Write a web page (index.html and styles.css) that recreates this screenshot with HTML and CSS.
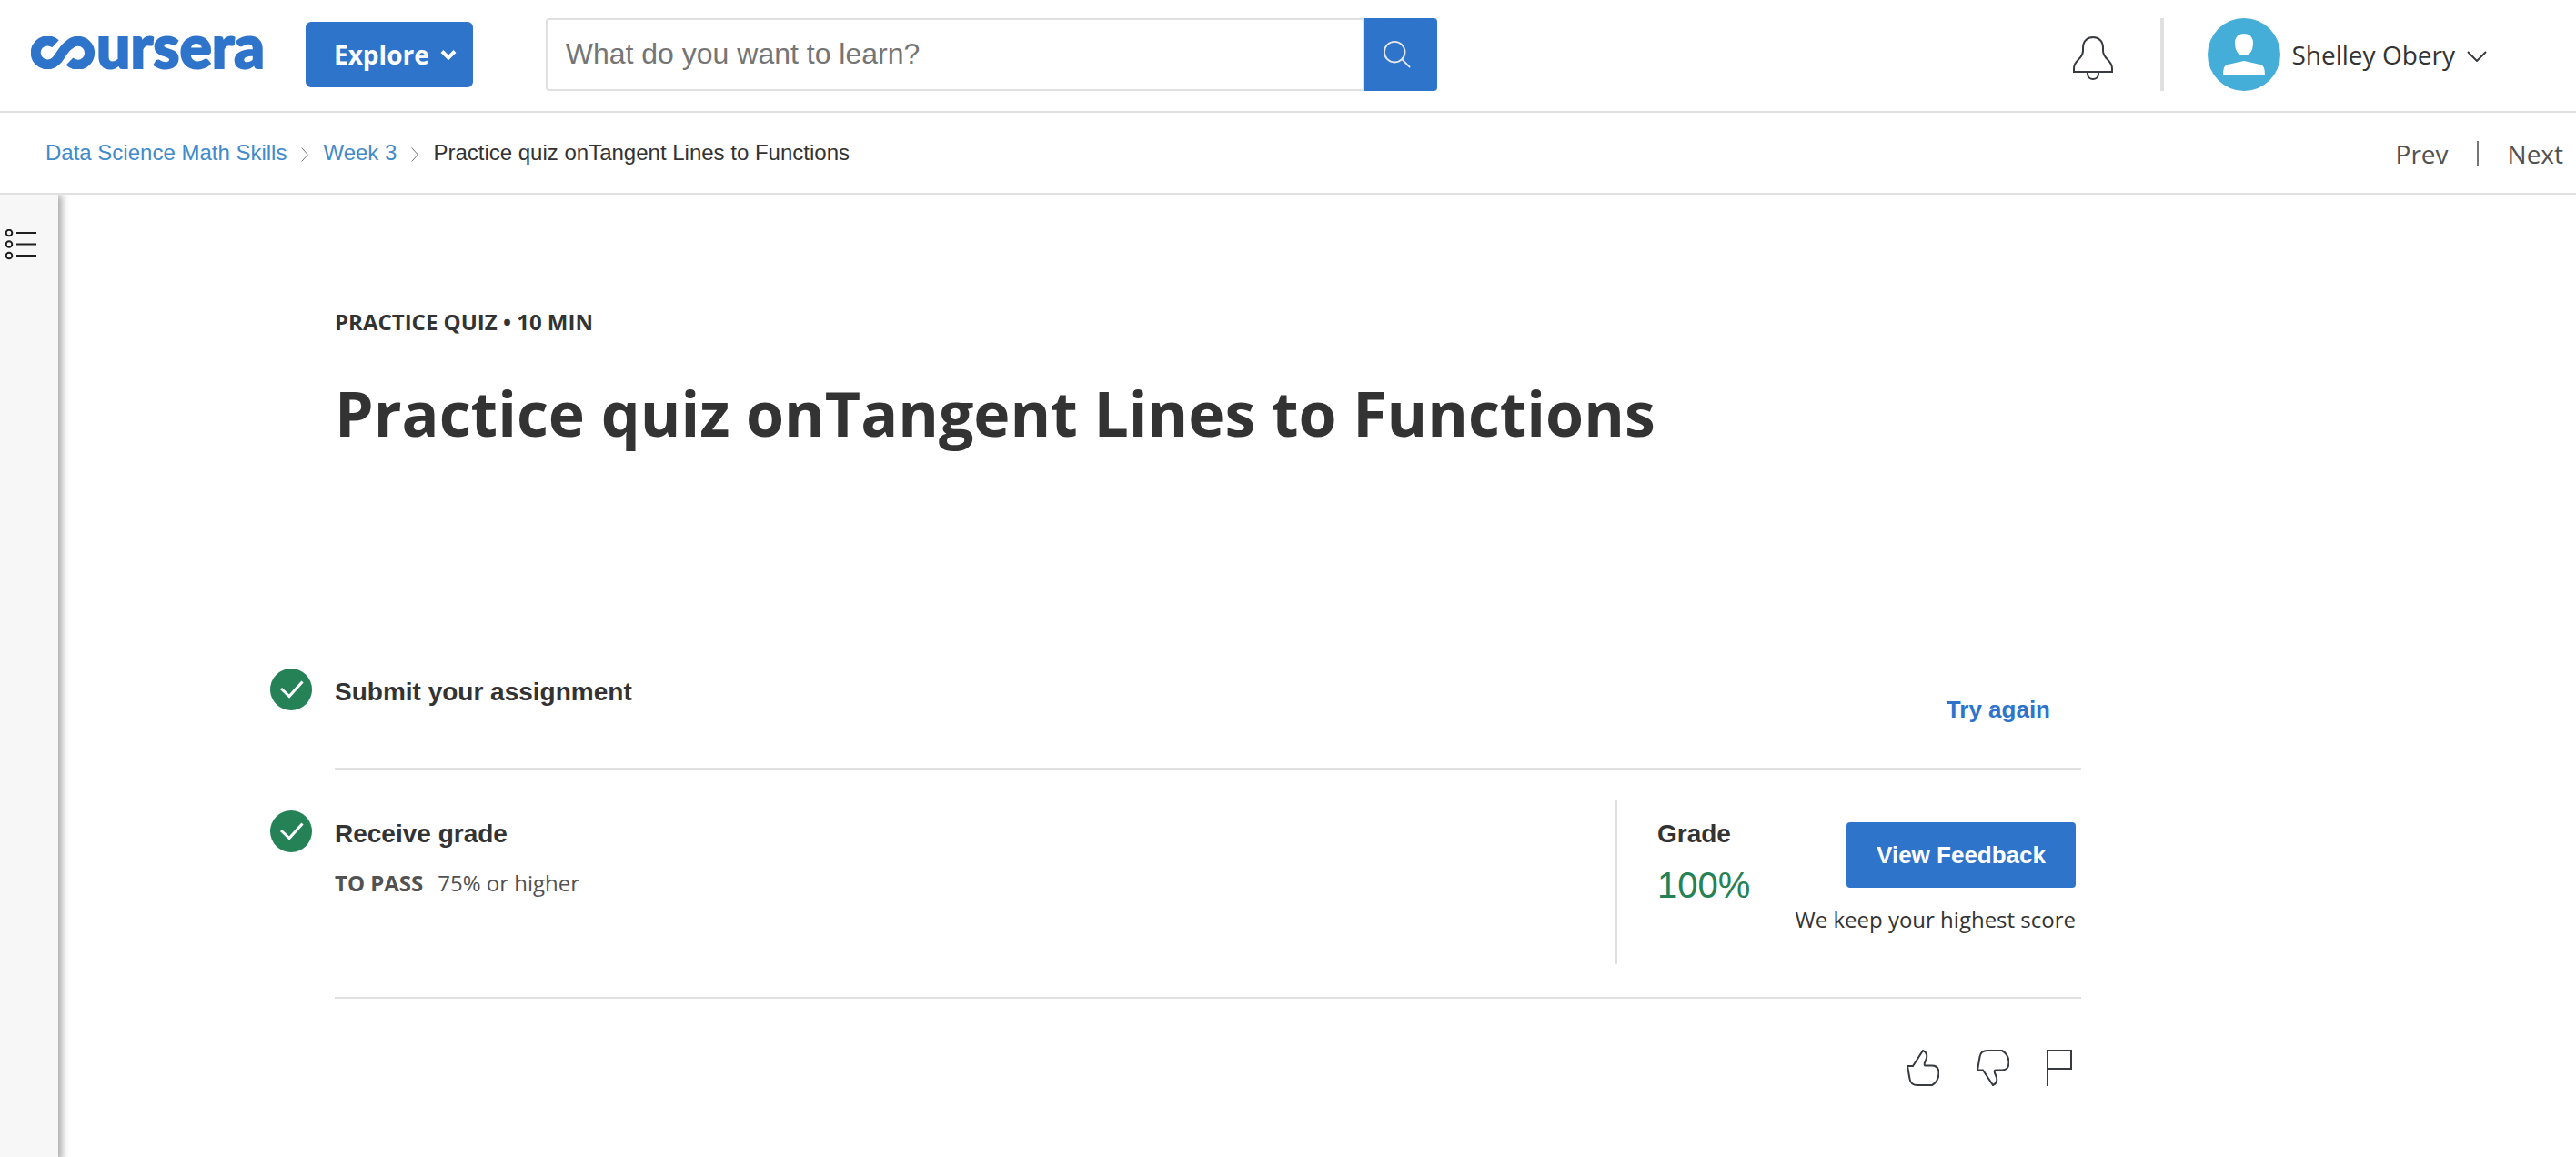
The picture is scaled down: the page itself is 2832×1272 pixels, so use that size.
FILE: index.html
```html
<!DOCTYPE html>
<html lang="en">
<head>
<meta charset="utf-8">
<meta name="viewport" content="width=device-width, initial-scale=1">
<title>Practice quiz onTangent Lines to Functions | Coursera</title>
<link rel="stylesheet" href="styles.css">
</head>
<body>
<header class="topbar">
  <a class="logo" href="#" aria-label="Coursera">
    <svg class="logo-mark" viewBox="0 0 70 36" aria-hidden="true"><path d="M27 8.3A13 13 0 1 0 27.5 27C33 22 35.500 13 42.500 9A13 13 0 1 1 42.500 27.500"/></svg>
    <span class="logo-word">ursera</span>
  </a>
  <button class="explore" type="button">Explore
    <svg class="explore-chevron" viewBox="0 0 18 12" aria-hidden="true"><path d="M2 2.500l7 7 7-7"/></svg>
  </button>
  <form class="search" role="search">
    <input class="search-input" type="text" aria-label="Search" placeholder="What do you want to learn?">
    <button class="search-button" type="button" aria-label="Submit search">
      <svg class="search-icon" viewBox="0 0 34 34" aria-hidden="true"><circle cx="14" cy="14" r="12"/><path d="M22.500 22.500L32 32"/></svg>
    </button>
  </form>
  <div class="account">
    <button class="plain notifications" type="button" aria-label="Notifications">
      <svg class="bell" viewBox="0 0 44 48" aria-hidden="true"><path d="M1 39V35C1 26 11 25 11 16V12.500C11 5 16 1 22 1S33 5 33 12.500V16C33 25 43 26 43 35V39ZM16 39.500V41C16 45 19 47 22 47S28 45 28 41V39.500"/></svg>
    </button>
    <button class="plain profile" type="button">
      <svg class="avatar" viewBox="0 0 80 80" aria-hidden="true"><circle cx="40" cy="40" r="40" fill="#44aed9"/><path fill="#fff" d="M40 17C46 17 50 21 50 27C50 35 47 41 40 41S30 35 30 27C30 21 34 17 40 17ZM17 63C17 56 18 52 22 51L40 47 58 51C62 52 63 56 63 63Z"/></svg>
      <span class="profile-name">Shelley Obery</span>
      <svg class="profile-chevron" viewBox="0 0 22 12" aria-hidden="true"><path d="M1 1l10 10L21 1"/></svg>
    </button>
  </div>
</header>

<div class="subbar">
  <nav class="crumbs" aria-label="Breadcrumb">
    <a href="#">Data Science Math Skills</a>
    <svg class="crumb-arrow" viewBox="0 0 8 16" aria-hidden="true"><path d="M.7.5L7.300 8 .7 15.500"/></svg>
    <a href="#">Week 3</a>
    <svg class="crumb-arrow" viewBox="0 0 8 16" aria-hidden="true"><path d="M.7.5L7.300 8 .7 15.500"/></svg>
    <span>Practice quiz onTangent Lines to Functions</span>
  </nav>
  <nav class="pager" aria-label="Items">
    <a class="pager-prev" href="#">Prev</a>
    <a class="pager-next" href="#">Next</a>
  </nav>
</div>

<div class="layout">
  <aside class="rail">
    <button class="plain" type="button" aria-label="Show course outline">
      <svg class="outline-icon" viewBox="0 0 34 34" aria-hidden="true"><circle cx="4" cy="4" r="3.300"/><circle cx="4" cy="16.500" r="3.300"/><circle cx="4" cy="29" r="3.300"/><path d="M12 4H34M12 16.500H34M12 29H34"/></svg>
    </button>
  </aside>
  <main class="content">
    <div class="intro">
      <p class="kicker">PRACTICE QUIZ • 10 MIN</p>
      <h1 class="title">Practice quiz onTangent Lines to Functions</h1>
    </div>
    <section class="step">
      <svg class="check" viewBox="0 0 46 46" aria-hidden="true"><circle cx="23" cy="23" r="23"/><path d="M12 22L21 30.500 35.500 14.500"/></svg>
      <div class="step-body">
        <h2 class="step-title">Submit your assignment</h2>
        <button class="plain retry" type="button">Try again</button>
      </div>
    </section>
    <section class="step">
      <svg class="check" viewBox="0 0 46 46" aria-hidden="true"><circle cx="23" cy="23" r="23"/><path d="M12 22L21 30.500 35.500 14.500"/></svg>
      <div class="step-body">
        <div class="step-text">
          <h2 class="step-title">Receive grade</h2>
          <p class="pass"><strong>TO PASS</strong><span>75% or higher</span></p>
        </div>
        <div class="grade">
          <div class="grade-score">
            <h2 class="step-title">Grade</h2>
            <p class="score">100%</p>
          </div>
          <div class="grade-action">
            <button class="feedback" type="button">View Feedback</button>
            <p class="note">We keep your highest score</p>
          </div>
        </div>
      </div>
    </section>
    <div class="reactions">
      <button class="plain" type="button" aria-label="Like"><svg class="reaction" viewBox="0 0 36 40" aria-hidden="true"><path d="M1 18H7L18 1C23 3 23 8 21 12C19.500 15 19 17.500 21 17.500H28C33 17.500 35.500 21 35.500 26C35.500 32 32 37 28 39H12C7 39 4 36 3.500 32Z"/></svg></button>
      <button class="plain" type="button" aria-label="Dislike"><svg class="reaction" viewBox="0 0 36 40" aria-hidden="true"><path d="M1 22.500H7L18 39C23 37 23 32 21 28C19.500 25 19 22.500 21 22.500H28C33 22.500 35.500 19 35.500 14C35.500 8 32 3 28 1H12C7 1 4 4 3.500 8Z"/></svg></button>
      <button class="plain" type="button" aria-label="Report"><svg class="reaction flag" viewBox="0 0 28 40" aria-hidden="true"><path d="M1 40V1H27V21H1"/></svg></button>
    </div>
  </main>
</div>
</body>
</html>
```

FILE: styles.css
```css
* { box-sizing: border-box; }

body {
  margin: 0;
  min-height: 100vh;
  display: flex;
  flex-direction: column;
  background: #fff;
  color: #333;
  font-family: "Open Sans", sans-serif;
  font-size: 24px;
  line-height: 32px;
}

h1, h2, p { margin: 0; }
a { text-decoration: none; }
svg { display: block; flex: none; fill: none; }
button { border: 0; font-family: inherit; cursor: pointer; }

.plain {
  padding: 0;
  background: none;
  color: inherit;
}

/* Top bar */
.topbar {
  display: flex;
  align-items: flex-start;
  height: 124px;
  padding: 20px 98px 0 34px;
  border-bottom: 2px solid #e0e0e0;
}

.logo {
  display: flex;
  align-items: center;
  width: 254px;
  height: 76px;
  color: #2f74cb;
}

.logo-mark {
  width: 70px;
  height: 36px;
  stroke: currentColor;
  stroke-width: 11;
}

.logo-word {
  font: 900 66px/64px Lato, sans-serif;
  margin: -16px 0 0 2px;
  -webkit-text-stroke: 2px currentColor;
}

.explore {
  display: flex;
  align-items: center;
  gap: 12px;
  height: 72px;
  margin: 4px 80px 0 48px;
  padding: 0 18px 0 31px;
  border-radius: 6px;
  background: #2f74cb;
  color: #fff;
  font-size: 28px;
  font-weight: 700;
}

.explore-chevron {
  width: 18px;
  height: 12px;
  stroke: #fff;
  stroke-width: 4;
}

.search {
  display: flex;
  flex: 0 1 980px;
  height: 80px;
}

.search-input {
  flex: 1;
  min-width: 0;
  padding: 0 20px 2px;
  border: 2px solid #e0e0e0;
  border-radius: 4px 0 0 4px;
  color: #333;
  font: 32px "Liberation Sans", sans-serif;
}

.search-input::placeholder { color: #757575; opacity: 1; }

.search-button {
  width: 80px;
  padding: 0 20px;
  border-radius: 0 4px 4px 0;
  background: #2f74cb;
}

.search-icon {
  width: 32px;
  height: 32px;
  stroke: #e8e8e8;
  stroke-width: 2;
}

.account {
  display: flex;
  margin-left: auto;
}

.notifications { padding-top: 8px; }

.bell {
  width: 44px;
  height: 48px;
  stroke: #373a3f;
  stroke-width: 2;
}

.profile {
  display: flex;
  align-items: center;
  height: 80px;
  margin-left: 52px;
  padding-left: 48px;
  border-left: 4px solid #e0e0e0;
  font-size: 28px;
}

.avatar {
  width: 80px;
  height: 80px;
}

.profile-name { margin: 0 13px 0 12px; }

.profile-chevron {
  width: 22px;
  height: 12px;
  margin-top: 4px;
  stroke: #373a3f;
  stroke-width: 2;
}

/* Breadcrumbs and pager */
.subbar {
  display: flex;
  align-items: center;
  justify-content: space-between;
  height: 90px;
  padding: 0 14px 0 50px;
  border-bottom: 2px solid #e0e0e0;
}

.crumbs {
  display: flex;
  align-items: center;
  gap: 16px;
  font-family: "Liberation Sans", sans-serif;
}

.crumbs a { color: #428bca; }

.crumb-arrow {
  width: 8px;
  height: 16px;
  margin-top: 4px;
  stroke: #757575;
  stroke-width: 1;
}

.pager {
  display: flex;
  font-size: 28px;
  line-height: 28px;
  margin-top: 2px;
}

.pager a { color: #525252; }

.pager-prev {
  padding-right: 31px;
  border-right: 2px solid #757575;
}

.pager-next { padding-left: 32px; }

/* Page body */
.layout {
  display: flex;
  flex: 1;
}

.rail {
  flex: none;
  width: 64px;
  padding: 38px 6px;
  background: #f7f7f7;
  box-shadow: 2px 2px 8px 2px rgba(0, 0, 0, 0.35);
  clip-path: inset(0 -16px 0 0);
}

.outline-icon {
  width: 34px;
  height: 34px;
  stroke: #1f1f1f;
  stroke-width: 2;
}

.content {
  flex: 0 1 2224px;
  min-width: 0;
  padding: 124px 0 48px 233px;
}

.intro {
  padding: 0 0 190px 71px;
}

.kicker {
  font-weight: 700;
}

.title {
  margin-top: 38px;
  font-size: 68px;
  line-height: 92px;
  font-weight: 700;
}

.step {
  display: grid;
  grid-template-columns: 71px 1fr;
}

.check {
  width: 46px;
  height: 46px;
  margin-top: 45px;
  fill: #258256;
}

.check path {
  fill: none;
  stroke: #fff;
  stroke-width: 3;
}

.step-body {
  display: flex;
  justify-content: space-between;
  min-height: 156px;
  border-bottom: 2px solid #e0e0e0;
}

.step-title {
  margin-top: 55px;
  font: 700 28px/32px "Liberation Sans", sans-serif;
}

.retry,
.feedback {
  font: 700 26px/32px "Liberation Sans", sans-serif;
}

.retry {
  align-self: flex-start;
  margin: 74px 34px 0 0;
  color: #2f74cb;
}

.pass {
  display: flex;
  gap: 16px;
  margin-top: 22px;
  color: #525252;
}

.grade {
  display: flex;
  justify-content: space-between;
  flex: 0 1 512px;
  height: 180px;
  margin: 34px 0 36px;
  padding: 0 6px 0 44px;
  border-left: 2px solid #e0e0e0;
}

.grade-score .step-title { margin-top: 21px; }

.score {
  margin-top: 16px;
  color: #258256;
  font: 40px/48px "Liberation Sans", sans-serif;
}

.grade-action {
  display: flex;
  flex-direction: column;
  align-items: flex-end;
  padding-top: 24px;
}

.feedback {
  height: 72px;
  padding: 0 33px;
  border-radius: 4px;
  background: #2f74cb;
  color: #fff;
}

.note { margin-top: 19px; }

.reactions {
  display: flex;
  justify-content: flex-end;
  gap: 41px;
  padding: 56px 10px 0 0;
}

.reaction {
  width: 36px;
  height: 40px;
  stroke: #373a3f;
  stroke-width: 2;
}

.flag { width: 28px; }
```
